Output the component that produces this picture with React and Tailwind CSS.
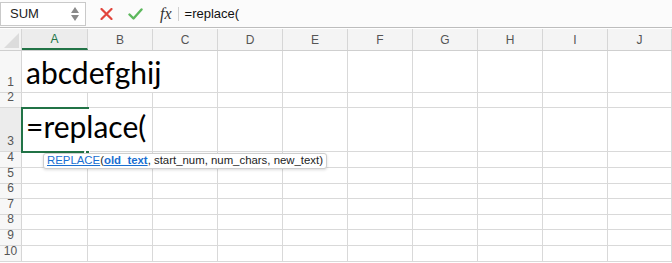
import React from 'react'

const cols = [
  { name: 'A', w: 66 },
  { name: 'B', w: 65 },
  { name: 'C', w: 65 },
  { name: 'D', w: 65 },
  { name: 'E', w: 65 },
  { name: 'F', w: 65 },
  { name: 'G', w: 65 },
  { name: 'H', w: 65 },
  { name: 'I', w: 65 },
  { name: 'J', w: 64 },
]

// row heights including the bottom grid line
const rows = [
  { n: 1, h: 42 },
  { n: 2, h: 15 },
  { n: 3, h: 44 },
  { n: 4, h: 16 },
  { n: 5, h: 16 },
  { n: 6, h: 15 },
  { n: 7, h: 16 },
  { n: 8, h: 15 },
  { n: 9, h: 16 },
  { n: 10, h: 16 },
]

// text spilling out of A hides these gridlines
const overflow = { 1: ['A', 'B'], 3: ['A'] }

const ui = { fontFamily: '"Liberation Sans", Arial, sans-serif' }
const cellFont = { fontFamily: 'Lato, "Open Sans", sans-serif' }

function Toolbar() {
  return (
    <div className="relative h-[28px] bg-[#fbfbfb] border-b border-[#bdbdbd] flex items-center" style={ui}>
      <div className="h-[24px] w-[86px] bg-white border border-[#c9c9c9] flex items-center justify-between pl-[9px] pr-[6px]">
        <span className="text-[13px] text-[#222]">SUM</span>
        <div className="flex flex-col items-center gap-[2px] text-[#8a8a8a]">
          <svg width="8" height="6" viewBox="0 0 8 6"><path d="M4 0 L8 6 L0 6 Z" fill="currentColor" /></svg>
          <svg width="8" height="6" viewBox="0 0 8 6"><path d="M0 0 L8 0 L4 6 Z" fill="currentColor" /></svg>
        </div>
      </div>
      <svg className="ml-[14px]" width="13" height="12" viewBox="0 0 13 12">
        <path d="M1.5 1 L11.5 11 M11.5 1 L1.5 11" stroke="#e2453c" strokeWidth="2.2" strokeLinecap="round" />
      </svg>
      <svg className="ml-[15px]" width="15" height="12" viewBox="0 0 15 12">
        <path d="M1.5 6.5 L5.5 10.5 L13.5 1.5" stroke="#5cb85c" strokeWidth="2.4" fill="none" strokeLinecap="round" strokeLinejoin="round" />
      </svg>
      <span className="ml-[17px] text-[16px] italic text-[#333] leading-none" style={{ fontFamily: '"Liberation Serif", serif' }}>fx</span>
      <div className="ml-[6px] h-[14px] w-px bg-[#d0d0d0]" />
      <span className="ml-[6px] text-[13px] text-[#111]">=replace(</span>
    </div>
  )
}

function HeaderRow() {
  return (
    <div className="flex h-[22px] bg-[#f4f4f4] border-b border-[#cfcfcf]" style={ui}>
      <div className="relative w-[22px] shrink-0 border-r border-[#d6d6d6] overflow-hidden">
        <svg className="absolute right-[2px] bottom-[2px]" width="15" height="15" viewBox="0 0 15 15">
          <path d="M15 0 L15 15 L0 15 Z" fill="#dcdcdc" />
        </svg>
      </div>
      {cols.map((c) => (
        <div
          key={c.name}
          style={{ width: c.w }}
          className={
            c.name === 'A'
              ? 'shrink-0 flex items-center justify-center text-[12px] text-[#217346] border-r border-[#d6d6d6] border-b-2 border-b-[#217346] bg-[#ececec]'
              : 'shrink-0 flex items-center justify-center text-[12px] text-[#555] border-r border-[#d6d6d6]'
          }
        >
          {c.name}
        </div>
      ))}
    </div>
  )
}

function Row({ n, h }) {
  const hidden = overflow[n] || []
  return (
    <div className="flex border-b border-[#d9d9d9]" style={{ height: h }}>
      <div
        className={
          'w-[22px] shrink-0 border-r border-[#d6d6d6] flex items-end justify-center pb-[1px] text-[12px] text-[#555] ' +
          (n === 3 ? 'bg-[#ececec]' : 'bg-[#f7f7f7]')
        }
        style={ui}
      >
        {n}
      </div>
      {cols.map((c) => (
        <div
          key={c.name}
          style={{ width: c.w }}
          className={'shrink-0 relative border-r ' + (hidden.includes(c.name) ? 'border-transparent' : 'border-[#d9d9d9]')}
        >
          {n === 1 && c.name === 'A' && (
            <span className="absolute left-[4px] bottom-[5px] text-[30px] leading-none text-black whitespace-nowrap z-10" style={cellFont}>
              abcdefghij
            </span>
          )}
          {n === 3 && c.name === 'A' && (
            <span className="absolute left-[4px] bottom-[10px] text-[30px] leading-none text-black whitespace-nowrap z-10" style={cellFont}>
              =replace(
            </span>
          )}
        </div>
      ))}
    </div>
  )
}

export default function App() {
  return (
    <div className="w-[672px] h-[263px] overflow-hidden bg-white relative">
      <Toolbar />
      <div className="h-[1px] bg-white" />
      <HeaderRow />
      {rows.map((r) => (
        <Row key={r.n} n={r.n} h={r.h} />
      ))}

      {/* active cell border on A3 (right edge hidden under the edit text) */}
      <div className="absolute left-[21px] top-[107px] w-[68px] h-[2px] bg-[#217346]" />
      <div className="absolute left-[21px] top-[107px] w-[2px] h-[46px] bg-[#217346]" />
      <div className="absolute left-[21px] top-[151px] w-[63px] h-[2px] bg-[#217346]" />
      <div className="absolute left-[85px] top-[150px] w-[5px] h-[5px] bg-[#217346] border border-white" />

      {/* function tooltip */}
      <div
        className="absolute left-[43px] top-[153px] h-[16px] px-[3px] bg-white border border-[#cfcfcf] rounded-[3px] shadow-[0_1px_3px_rgba(0,0,0,0.15)] flex items-center text-[11.4px] text-[#222] whitespace-nowrap"
        style={ui}
      >
        <span className="text-[#1a6fd1] underline">REPLACE</span>
        <span>(</span>
        <span className="text-[#1a6fd1] underline font-bold">old_text</span>
        <span>, start_num, num_chars, new_text)</span>
      </div>
    </div>
  )
}
